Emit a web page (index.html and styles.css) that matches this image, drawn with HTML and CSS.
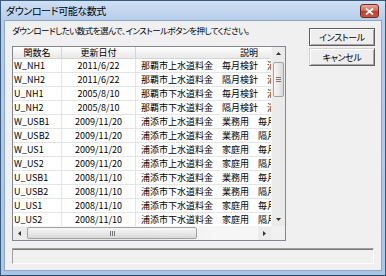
FILE: index.html
```html
<!DOCTYPE html>
<html lang="ja">
<head>
    <meta charset="UTF-8">
    <title>ダウンロード可能な数式</title>
    <link rel="stylesheet" href="styles.css">
</head>
<body>
    <div class="window">
        <!-- Title bar -->
        <div class="titlebar">
            <span class="title">ダウンロード可能な数式</span>
            <div class="close">
                <svg width="9" height="7" viewBox="0 0 9 7"><path d="M1 0.5 L8 6.5 M8 0.5 L1 6.5" stroke="#fff" stroke-width="1.8"/></svg>
            </div>
        </div>

        <div class="client">
            <div class="top">
                <div class="main">
                    <p class="hint">ダウンロードしたい数式を選んで、インストールボタンを押してください。</p>

                    <!-- List -->
                    <div class="listview">
                        <div class="viewport">
                            <div class="row head">
                                <div class="cell">関数名</div>
                                <div class="cell">更新日付</div>
                                <div class="cell">説明</div>
                            </div>
                            <div class="row"><div class="cell name">W_NH1</div><div class="cell date">2011/6/22</div><div class="cell desc">那覇市上水道料金　毎月検針　消費税込</div></div>
                            <div class="row"><div class="cell name">W_NH2</div><div class="cell date">2011/6/22</div><div class="cell desc">那覇市上水道料金　隔月検針　消費税込</div></div>
                            <div class="row"><div class="cell name">U_NH1</div><div class="cell date">2005/8/10</div><div class="cell desc">那覇市下水道料金　毎月検針　消費税込</div></div>
                            <div class="row"><div class="cell name">U_NH2</div><div class="cell date">2005/8/10</div><div class="cell desc">那覇市下水道料金　隔月検針　消費税込</div></div>
                            <div class="row"><div class="cell name">W_USB1</div><div class="cell date">2009/11/20</div><div class="cell desc">浦添市上水道料金　業務用　毎月検針</div></div>
                            <div class="row"><div class="cell name">W_USB2</div><div class="cell date">2009/11/20</div><div class="cell desc">浦添市上水道料金　業務用　隔月検針</div></div>
                            <div class="row"><div class="cell name">W_US1</div><div class="cell date">2009/11/20</div><div class="cell desc">浦添市上水道料金　家庭用　毎月検針</div></div>
                            <div class="row"><div class="cell name">W_US2</div><div class="cell date">2009/11/20</div><div class="cell desc">浦添市上水道料金　家庭用　隔月検針</div></div>
                            <div class="row"><div class="cell name">U_USB1</div><div class="cell date">2008/11/10</div><div class="cell desc">浦添市下水道料金　業務用　毎月検針</div></div>
                            <div class="row"><div class="cell name">U_USB2</div><div class="cell date">2008/11/10</div><div class="cell desc">浦添市下水道料金　業務用　隔月検針</div></div>
                            <div class="row"><div class="cell name">U_US1</div><div class="cell date">2008/11/10</div><div class="cell desc">浦添市下水道料金　家庭用　毎月検針</div></div>
                            <div class="row"><div class="cell name">U_US2</div><div class="cell date">2008/11/10</div><div class="cell desc">浦添市下水道料金　家庭用　隔月検針</div></div>
                        </div>

                        <div class="vscroll">
                            <div class="arrow"><svg width="5" height="3" viewBox="0 0 5 3"><path d="M0 3 L2.5 0 L5 3 Z" fill="#333"/></svg></div>
                            <div class="track">
                                <div class="thumb"><span class="grip"></span></div>
                            </div>
                            <div class="arrow"><svg width="5" height="3" viewBox="0 0 5 3"><path d="M0 0 L2.5 3 L5 0 Z" fill="#333"/></svg></div>
                        </div>

                        <div class="hscroll">
                            <div class="arrow"><svg width="3" height="5" viewBox="0 0 3 5"><path d="M3 0 L0 2.5 L3 5 Z" fill="#333"/></svg></div>
                            <div class="track">
                                <div class="thumb"><span class="grip"></span></div>
                            </div>
                            <div class="arrow"><svg width="3" height="5" viewBox="0 0 3 5"><path d="M0 0 L3 2.5 L0 5 Z" fill="#333"/></svg></div>
                        </div>

                        <div class="corner"></div>
                    </div>
                </div>

                <!-- Buttons -->
                <div class="side">
                    <button class="btn default">インストール</button>
                    <button class="btn">キャンセル</button>
                </div>
            </div>

            <!-- Status -->
            <div class="status"></div>
        </div>
    </div>
</body>
</html>
```

FILE: styles.css
```css
body {
    margin: 0;
    font-family: "Noto Sans CJK JP", "Noto Sans", sans-serif;
    color: #000;
}

.window {
    width: 386px;
    height: 276px;
    box-sizing: border-box;
    display: flex;
    flex-direction: column;
    padding: 0 3px 4px;
    border: 1px solid #3a5a7e;
    border-bottom-color: #1f4d66;
    background: linear-gradient(#cfe0f4, #b6cdeb 19px, #aac5e7);
}

.titlebar {
    height: 19px;
    display: flex;
    align-items: center;
    justify-content: space-between;
    padding-left: 2px;
}

.title {
    font-size: 10px;
    line-height: 12px;
    letter-spacing: -0.4px;
    font-feature-settings: "palt";
}

.close {
    width: 19px;
    height: 14px;
    box-sizing: border-box;
    margin: 1px 3px 0 0;
    display: flex;
    align-items: center;
    justify-content: center;
    border: 1px solid #6d2b22;
    border-radius: 3px;
    background: linear-gradient(#e8ab9c, #d26a58 45%, #bf3e2c 55%, #c9553f);
}

.client {
    flex: 1;
    display: flex;
    flex-direction: column;
    background: #f0f0f0;
    border: 1px solid #8ea7c4;
    padding: 3px 6px 6px 7px;
}

.top {
    display: flex;
}

.main {
    width: 274px;
}

.hint {
    margin: 0 0 10px;
    font-size: 8.5px;
    line-height: 12px;
    height: 12px;
    letter-spacing: -0.55px;
    white-space: nowrap;
    font-feature-settings: "palt";
}

/* list view */
.listview {
    height: 195px;
    box-sizing: border-box;
    border: 1px solid #828790;
    background: #fff;
    display: grid;
    grid-template-columns: 258px 14px;
    grid-template-rows: 179px 14px;
}

.viewport {
    overflow: hidden;
    font-size: 9px;
}

.row {
    display: grid;
    grid-template-columns: 49px 74px 227px;
    width: 350px;
    height: 14px;
    box-sizing: border-box;
    border-bottom: 1px solid #e4e4e4;
}

.cell {
    box-sizing: border-box;
    border-right: 1px solid #e4e4e4;
    line-height: 13px;
    white-space: nowrap;
    overflow: hidden;
}

.name {
    padding-left: 1px;
}

.date {
    text-align: center;
}

.desc {
    padding-left: 5px;
}

.row.head {
    height: 12px;
    border-bottom: 1px solid #d5d5d5;
    background: linear-gradient(#fff, #f3f3f3 50%, #e9e9e9);
}

.row.head .cell {
    line-height: 11px;
    text-align: center;
    border-right-color: #d5d5d5;
}

.vscroll {
    display: flex;
    flex-direction: column;
    background: #ebebeb;
    border-left: 1px solid #f4f4f4;
}

.hscroll {
    display: flex;
    background: #ebebeb;
    border-top: 1px solid #f4f4f4;
}

.arrow {
    flex: 0 0 13px;
    display: flex;
    align-items: center;
    justify-content: center;
}

.vscroll .track {
    flex: 1;
    padding-top: 2px;
}

.vscroll .thumb {
    height: 35px;
    margin: 0 1px;
    box-sizing: border-box;
    border: 1px solid #a3a3a3;
    border-radius: 2px;
    background: linear-gradient(90deg, #f7f7f7, #e6e6e6 60%, #d8d8d8);
    display: flex;
    align-items: center;
    justify-content: center;
}

.vscroll .grip {
    width: 5px;
    height: 5px;
    background: repeating-linear-gradient(#777 0 1px, transparent 1px 2px);
}

.hscroll .track {
    flex: 1;
    padding-left: 1px;
    background: linear-gradient(90deg, #e6e6e6 50%, #f6f6f6 80%);
}

.hscroll .thumb {
    width: 170px;
    height: 12px;
    box-sizing: border-box;
    border: 1px solid #a3a3a3;
    border-radius: 2px;
    background: linear-gradient(#f7f7f7, #e6e6e6 60%, #d8d8d8);
    display: flex;
    align-items: center;
    justify-content: center;
}

.hscroll .grip {
    width: 5px;
    height: 5px;
    background: repeating-linear-gradient(90deg, #777 0 1px, transparent 1px 2px);
}

.corner {
    background: #f0f0f0;
}

/* buttons */
.side {
    display: flex;
    flex-direction: column;
    gap: 2px;
    margin-left: 23px;
    padding-top: 4px;
}

.btn {
    width: 66px;
    height: 18px;
    padding: 0;
    font-family: inherit;
    font-size: 9px;
    letter-spacing: -0.4px;
    font-feature-settings: "palt";
    color: #000;
    background: #eeeeee;
    border: 1px solid;
    border-color: #d0d0d0 #5e5e5e #5e5e5e #d0d0d0;
    box-shadow: inset 1px 1px #fff, inset -1px -1px #a8a8a8;
}

.btn.default {
    border-color: #5e5e5e;
}

.status {
    margin: 7px 1px 0 0;
    height: 16px;
    box-sizing: border-box;
    border: 1px solid;
    border-color: #a0a0a0 #fff #fff #a0a0a0;
    box-shadow: inset 0 1px #7a7a7a;
}
```
